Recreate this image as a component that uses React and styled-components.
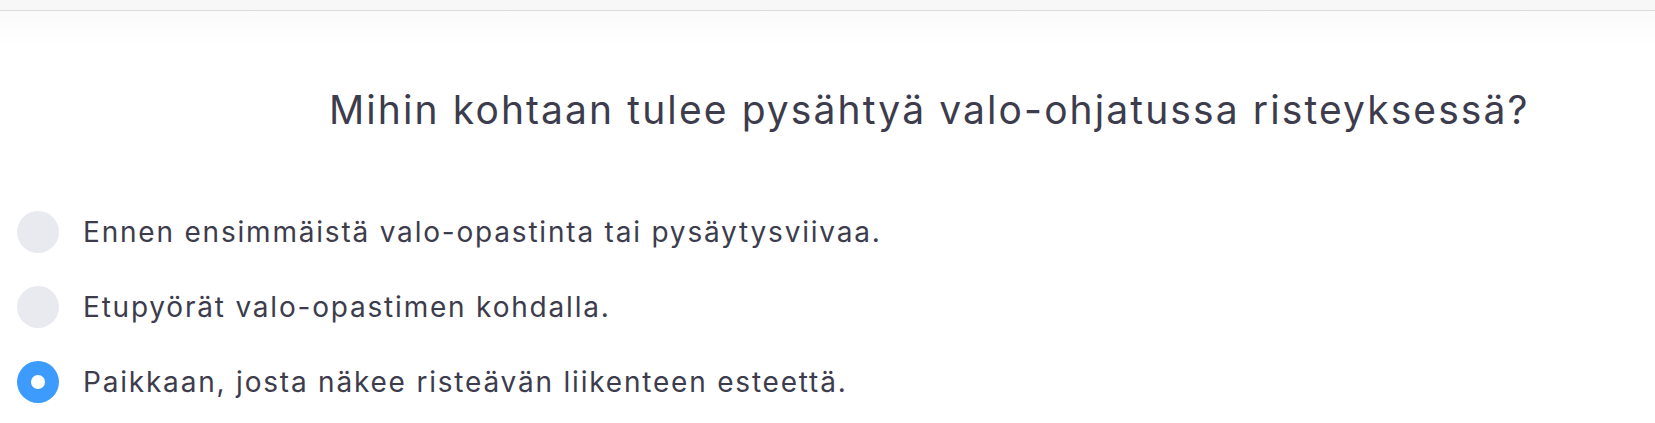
import React from 'react';
import styled, { createGlobalStyle } from 'styled-components';

const Global = createGlobalStyle`
    body {
        margin: 0;
        background: #ffffff;
        font-family: Inter, "Open Sans", sans-serif;
    }
`;

const TopBar = styled.div`
    height: 10px;
    background: #f7f7f7;
    border-bottom: 1px solid #dadada;
`;

const Page = styled.div`
    background: linear-gradient(#fafafa, #ffffff 40px);
    padding-top: 74px;
`;

const Title = styled.h1`
    margin: 0 0 76px 329px;
    font-size: 39px;
    font-weight: 400;
    line-height: 50px;
    color: #3c3c4d;
    letter-spacing: 2.1px;
`;

const List = styled.div`
    display: flex;
    flex-direction: column;
    gap: 33px;
    padding-left: 17px;
`;

const Row = styled.label`
    display: flex;
    align-items: center;
    gap: 24px;
    cursor: pointer;
`;

const Radio = styled.span`
    flex: none;
    width: 42px;
    height: 42px;
    border-radius: 50%;
    background: ${p => (p.checked ? '#3d9bfd' : '#e9eaf0')};
    display: flex;
    align-items: center;
    justify-content: center;

    &::after {
        content: '';
        width: 14px;
        height: 14px;
        border-radius: 50%;
        background: #ffffff;
        display: ${p => (p.checked ? 'block' : 'none')};
    }
`;

const Text = styled.span`
    font-size: 28px;
    line-height: 42px;
    color: #3c3c4d;
    letter-spacing: 1.8px;
`;

const options = [
    'Ennen ensimmäistä valo-opastinta tai pysäytysviivaa.',
    'Etupyörät valo-opastimen kohdalla.',
    'Paikkaan, josta näkee risteävän liikenteen esteettä.',
];

const App = () => {
    const selected = 2;

    return <>
        <Global />
        <TopBar />
        <Page>
            <Title>Mihin kohtaan tulee pysähtyä valo-ohjatussa risteyksessä?</Title>
            <List>
                {options.map((o, i) => (
                    <Row key={i}>
                        <Radio checked={i === selected} />
                        <Text>{o}</Text>
                    </Row>
                ))}
            </List>
        </Page>
    </>
}

export default App;
